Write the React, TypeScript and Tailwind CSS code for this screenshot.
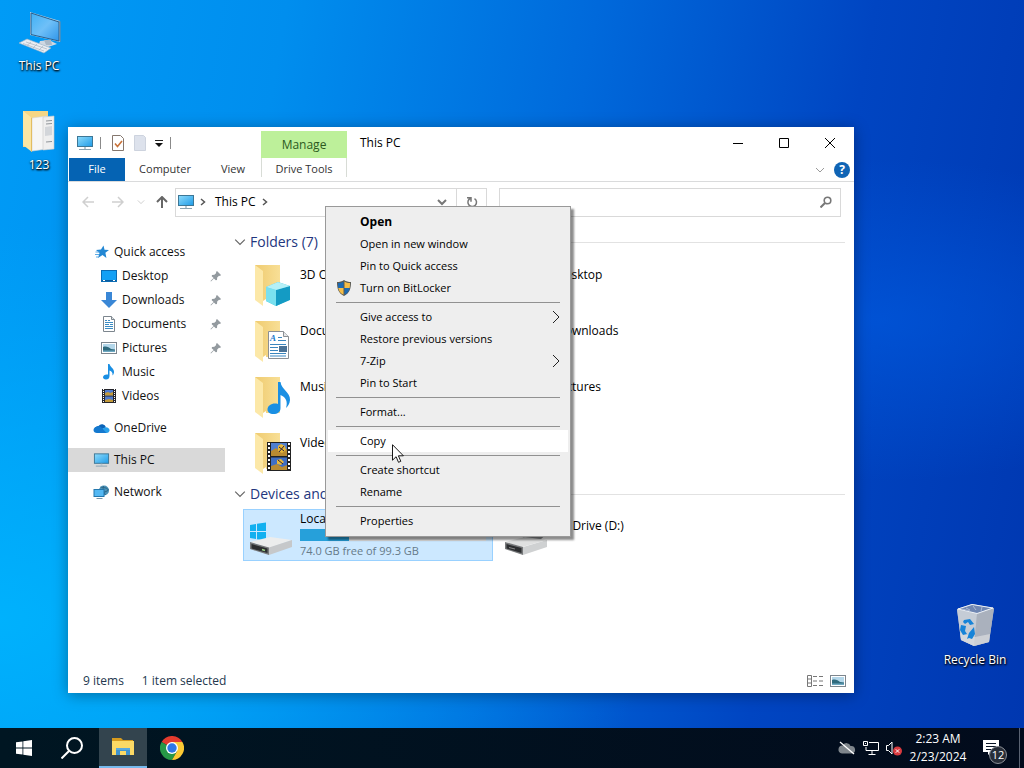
import React from "react";
import clsx from "clsx";

type IconProps = { className?: string };

/* ---------- icons ---------- */

const MonitorIcon = ({ className }: IconProps) => (
  <svg viewBox="0 0 18 16" className={className} aria-hidden="true">
    <defs>
      <linearGradient id="screen" x1="0" y1="0" x2="1" y2="1">
        <stop offset="0" stopColor="#8fdcfb" />
        <stop offset="1" stopColor="#1e9be8" />
      </linearGradient>
    </defs>
    <rect x="1.5" y="1.5" width="15" height="10" fill="url(#screen)" stroke="#3d7796" />
    <path d="M8 12h2v2H8z" fill="#b9c7cf" />
    <path d="M3 14.500h12" stroke="#8aa3b1" />
  </svg>
);

const DesktopPcIcon = ({ className }: IconProps) => (
  <svg viewBox="0 0 48 48" className={className} aria-hidden="true">
    <defs>
      <linearGradient id="pcScreen" x1="0" y1="0" x2="1" y2="1">
        <stop offset="0" stopColor="#3fb0f5" />
        <stop offset="0.5" stopColor="#6fc0f8" />
        <stop offset="1" stopColor="#2f95ea" />
      </linearGradient>
    </defs>
    <path d="M25 33l9-1 8 4-9 3-9-3z" fill="#cfd8e2" />
    <path d="M29 32h7l1 5h-6z" fill="#aab8c6" />
    <path d="M15 4l30 9v21L15 27z" fill="#b9d2e6" />
    <path d="M16 5l28 9v19L16 26.500z" fill="url(#pcScreen)" stroke="#2a5f8c" />
    <path d="M44 13l1.500.5V34L44 33z" fill="#6e8ca5" />
    <path d="M4 35l8-4 24 9-7 5z" fill="#e9edf2" stroke="#9fb2c4" strokeWidth=".6" />
    <path d="M8 35.500l21 7.500M11 34l21 7M12 37.500l4-3.500M18 40l4-4M24 42l4-4" stroke="#a9b5c2" strokeWidth=".7" />
  </svg>
);

const OpenFolderIcon = ({ className }: IconProps) => (
  <svg viewBox="0 0 40 48" className={className} aria-hidden="true">
    <path d="M4 4h25v36H4z" fill="#f5d685" />
    <path d="M13 11l15-2v33l-15 2z" fill="#f6f6f6" stroke="#d5d5d5" strokeWidth=".6" />
    <path d="M24 10l11-1v33l-11 1z" fill="#efefef" stroke="#cbcbcb" strokeWidth=".6" />
    <path d="M27 14l6-.5M27 17l6-.5M27 35l6-.5" stroke="#8f9499" />
    <path d="M26 20l7-1v9l-7 1z" fill="#d3d6da" />
    <path d="M4 4l9 7v34l-9-7z" fill="#fbe6a3" />
    <path d="M12 10.500l1 .5v34l-1-.800z" fill="#e3bd62" />
  </svg>
);

const FolderIcon = ({ children }: { children?: React.ReactNode }) => (
  <svg viewBox="0 0 40 48" className="h-12 w-10 shrink-0" aria-hidden="true">
    <defs>
      <linearGradient id="folderBack" x1="0" y1="0" x2="1" y2="0">
        <stop offset="0" stopColor="#efcb70" />
        <stop offset="1" stopColor="#f8df96" />
      </linearGradient>
    </defs>
    <path d="M2 4h25v36H8z" fill="url(#folderBack)" />
    <path d="M2 4l8 6v35l-8-6z" fill="#fce8a8" />
    <path d="M10 40l3-2v5l-3 2z" fill="#fff" />
    {children}
  </svg>
);

const CubeArt = () => (
  <g>
    <path d="M25 21l12 4-1 14-13 6-10-5V26z" fill="#3fc6df" />
    <path d="M13 26l10 3v16l-10-5z" fill="#79e0ef" />
    <path d="M23 29l14-4v14l-14 6z" fill="#149bc4" />
    <path d="M13 26l12-5 12 4-14 4z" fill="#b5f0f7" />
  </g>
);

const DocArt = () => (
  <g>
    <path d="M15.500 14.500h15l5 5v22h-20z" fill="#fff" stroke="#8a8f94" />
    <path d="M30.500 14.500v5h5" fill="#e4e6e8" stroke="#8a8f94" />
    <text x="17" y="24" fontSize="9" fontStyle="italic" fontWeight="700" fontFamily="Liberation Serif, serif" fill="#1979ca">A</text>
    <path d="M25 20.500h4M25 23.500h8M17 27.500h16M17 30.500h8M17 33.500h8M17 36.500h16M17 39h16" stroke="#3b87bf" />
    <path d="M26 29h8v6h-8z" fill="#4c7396" />
  </g>
);

const NoteArt = () => (
  <path d="M25 9h2.500c1 8 10 10 9.500 18-.4 4-2 6-4 8 2-6 0-11-5.500-13v13c0 4-3 6-7 6-4 0-6-2-6-4.500 0-4 5-7 10.500-5.500z" fill="#1a8fe3" />
);

const FilmArt = () => (
  <g>
    <path d="M14 13h24v29H14z" fill="#222" />
    <path d="M18 14h16v13H18z" fill="#4f7fd0" />
    <path d="M18 28.500h16V41H18z" fill="#3f6fc4" />
    <path d="M18 22l5-3 4 3 7-2v7H18zM18 37l6-2 5 3 5-2v5H18z" fill="#b98b32" />
    <path d="M25 17l3-2 4 2 1 4-4 3-4-2zM24 31l4-1 3 3-3 3-4-1z" fill="#e8b83a" />
    <path d="M26 18l5 4M31 17l-5 6M25 31l5 4" stroke="#2b2340" />
    <path d="M16 14v28M36 14v28" stroke="#fff" strokeWidth="2" strokeDasharray="2 2" />
  </g>
);

const HardDriveIcon = ({ windows }: { windows?: boolean }) => (
  <svg viewBox="0 0 48 40" className="h-10 w-12 shrink-0" aria-hidden="true">
    {windows && (
      <path d="M3 8l6-1v7H3zM10 6.800L19 5.500V14h-9zM3 15h6v7l-6-1zM10 15h9v8.500l-9-1.300z" fill="#12b0f0" />
    )}
    <path d="M3 25l20-5 22 3-23 8z" fill="#eceded" />
    <path d="M3 25l19 5.500V38L3 32z" fill="#77797b" />
    <path d="M22 30.500l23-7.500v7L22 38z" fill="#c6c8ca" />
    <path d="M4.500 27l16 4.500v4.500l-16-4.500z" fill="#2c2e30" />
    <path d="M15 32.500l3 1" stroke="#9fd38a" strokeWidth="1.500" />
  </svg>
);

const DiscDriveIcon = () => (
  <svg viewBox="0 0 48 40" className="h-10 w-12 shrink-0" aria-hidden="true">
    <ellipse cx="31" cy="18" rx="11" ry="6" fill="#8e9194" />
    <path d="M3 25l20-5 22 3-25 7z" fill="#dfe0e0" />
    <path d="M3 25l18 5v8L3 32z" fill="#77797b" />
    <path d="M21 30l24-7v7l-24 8z" fill="#cfd1d2" />
    <path d="M4.500 27l15 4v5l-15-4.500z" fill="#2c2e30" />
    <path d="M7 30.500l6 1.500" stroke="#888" />
  </svg>
);

const StarIcon = ({ className }: IconProps) => (
  <svg viewBox="0 0 16 16" className={className} aria-hidden="true">
    <path d="M9.500 1.500l1 4.300 4.500.200-3.600 2.800 1 5.200L8.500 11 4 14l1.500-5L2 6l5-.5z" fill="#2387d3" />
    <path d="M1.500 8h4M1 10.500h4M2 13h2.500" stroke="#5cabe6" />
  </svg>
);

const DesktopIcon = ({ className }: IconProps) => (
  <svg viewBox="0 0 16 16" className={className} aria-hidden="true">
    <rect x=".5" y="2.500" width="15" height="11" fill="#13a0f5" stroke="#0b6cb4" />
    <path d="M1 12.500h14" stroke="#0a5b9c" />
    <path d="M2 12.500h2M12 12.500h2" stroke="#fff" />
  </svg>
);

const DownloadIcon = ({ className }: IconProps) => (
  <svg viewBox="0 0 16 16" className={className} aria-hidden="true">
    <path d="M5 0h6v8h5l-8 8-8-8h5z" fill="#3a87d6" />
  </svg>
);

const DocumentIcon = ({ className }: IconProps) => (
  <svg viewBox="0 0 16 16" className={className} aria-hidden="true">
    <path d="M2.500.5h8l3 3v12h-11z" fill="#fff" stroke="#7d868e" />
    <path d="M10.500.5v3h3" fill="#dfe3e6" stroke="#7d868e" />
    <path d="M4 4.500h2M7 4.500h2M4 6.500h8M4 8.500h4M4 10.500h8M4 12.500h8M9 8.500h3" stroke="#3b8cc4" />
  </svg>
);

const PictureIcon = ({ className }: IconProps) => (
  <svg viewBox="0 0 16 16" className={className} aria-hidden="true">
    <rect x=".5" y="2.500" width="15" height="11" fill="#fff" stroke="#7d868e" />
    <path d="M2 4h12v8H2z" fill="#b4d7ea" />
    <path d="M2 7c3-1 6 0 8 2l4 .5V11H2z" fill="#2f6a7d" />
    <path d="M2 10.500h12V12H2z" fill="#6fa9c2" />
  </svg>
);

const MusicIcon = ({ className }: IconProps) => (
  <svg viewBox="0 0 16 16" className={className} aria-hidden="true">
    <path d="M7 0h1.500c.5 3 5 4.500 4.500 8.500-.2 1.500-1 2.500-1.600 3C12 9 11 7.500 8.500 6.500V12c0 2.500-1.500 3.500-3.500 3.500S2 14.500 2 13.300c0-2 2.500-3.300 5-2.700z" fill="#1a8fe3" />
  </svg>
);

const VideoIcon = ({ className }: IconProps) => (
  <svg viewBox="0 0 16 16" className={className} aria-hidden="true">
    <path d="M1 1h14v14H1z" fill="#26262c" />
    <path d="M4 2h8v5.500H4zM4 8.500h8V14H4z" fill="#4f7bd0" />
    <path d="M4 5l3-1 2 1 3-1v3.500H4zM4 12l4-1 4 1v2H4z" fill="#c39a3b" />
    <path d="M2.500 1v14M13.500 1v14" stroke="#fff" strokeDasharray="1 1" />
  </svg>
);

const OneDriveIcon = ({ className }: IconProps) => (
  <svg viewBox="0 0 16 16" className={className} aria-hidden="true">
    <path d="M5 6a4.300 4.300 0 0 1 7.500 1.200L7 10 1 8.500C2 7 3.500 6 5 6z" fill="#0a63b8" />
    <path d="M12 7.200c2.400-.2 4 1.300 4 3 0 1.500-1.200 2.800-3 2.800H4l4-4z" fill="#28a0ea" />
    <path d="M4.500 6.200C6 6 7 6.500 8 7.500l5 5.500H3.500C1.500 13 0 11.800 0 10c0-2 1.800-3.600 4.500-3.800z" fill="#1479cf" />
  </svg>
);

const NetworkIcon = ({ className }: IconProps) => (
  <svg viewBox="0 0 16 16" className={className} aria-hidden="true">
    <circle cx="10.500" cy="6.500" r="5" fill="#4a92b8" />
    <path d="M7 3c3 1 6 0 8 3M7 9c3-1 6-1 8-3M10 2c-1 3 0 7 2 9" stroke="#2d6787" fill="none" />
    <rect x=".5" y="5.500" width="10" height="7" fill="#54b8f3" stroke="#2377ad" />
    <path d="M3 14.500h6" stroke="#7895a8" />
  </svg>
);

const PinIcon = ({ className }: IconProps) => (
  <svg viewBox="0 0 12 12" className={className} aria-hidden="true">
    <path d="M7 1l4 4-1 1-1-.2L7.200 7.600 7 10 5.800 10.300 3.900 8.400 1 11.500.5 11l3.100-2.900L1.700 6.200 2 5l2.400-.2L6.200 3 6 2z" fill="#939a9f" />
  </svg>
);

const ShieldIcon = ({ className }: IconProps) => (
  <svg viewBox="0 0 16 16" className={className} aria-hidden="true">
    <path d="M8 0c2 1.500 4.500 2 7 2 0 6-1 11-7 14C2 13 1 8 1 2c2.500 0 5-.5 7-2z" fill="#5b5a52" />
    <path d="M7.500 1.500V8H2.300C2 6.500 2 4.500 2 3c2 0 4-.5 5.500-1.500zM8.500 8h5.200c-.5 3-2 5.200-5.200 6.800z" fill="#1b69b3" />
    <path d="M8.500 1.500C10 2.500 12 3 14 3c0 1.500 0 3.500-.3 5H8.500zM7.500 8v6.800C4.300 13.200 2.800 11 2.300 8z" fill="#f5bd47" />
  </svg>
);

const ChevronDown = ({ className }: IconProps) => (
  <svg viewBox="0 0 10 10" className={className} fill="none" stroke="currentColor" aria-hidden="true">
    <path d="M1 3l4 4 4-4" />
  </svg>
);

const ChevronRight = ({ className }: IconProps) => (
  <svg viewBox="0 0 10 10" className={className} fill="none" stroke="currentColor" strokeWidth="1.500" aria-hidden="true">
    <path d="M3 2l3.500 3L3 8" />
  </svg>
);

const RecycleBinIcon = ({ className }: IconProps) => (
  <svg viewBox="0 0 48 48" className={className} aria-hidden="true">
    <path d="M6 7l15-5 22 4-5 34-15 4-13-6z" fill="#b8bfc9" />
    <path d="M6 7l20 5-3 32-13-6z" fill="#c5ccd6" />
    <path d="M26 12l17-6-5 34-15 4z" fill="#aab1bd" />
    <path d="M7 7l14-4.500L42 6l-16 5.500z" fill="#6f86b2" stroke="#eef2f7" />
    <path d="M15 6l4 2M22 4l3 4M31 5l-1 4M11 7l8 2" stroke="#aebbd2" />
    <path d="M9 31l15 4 15-3-1 8-15 4-13-6z" fill="#dcdddf" opacity=".7" />
    <g fill="#1784d8">
      <path d="M13 18l6-1 4 5-4 1-2-3-3 2-2-2z" />
      <path d="M10 23l5 1-1 5 2 3-4 1-3-5z" />
      <path d="M18 31l5-6 1 7-3 5-3-1-2 1z" />
    </g>
  </svg>
);

const ChromeIcon = ({ className }: IconProps) => (
  <svg viewBox="0 0 24 24" className={className} aria-hidden="true">
    <path d="M12 12L1.600 6A12 12 0 0 1 22.400 6z" fill="#e33b2e" />
    <path d="M12 12L1.600 6A12 12 0 0 0 12 24l5.200-9z" fill="#279847" />
    <path d="M12 6h10.400A12 12 0 0 1 12 24l5.200-9z" fill="#fcc934" />
    <circle cx="12" cy="12" r="6" fill="#fff" />
    <circle cx="12" cy="12" r="4.700" fill="#2f77e6" />
  </svg>
);

const ExplorerIcon = ({ className }: IconProps) => (
  <svg viewBox="0 0 24 20" className={className} aria-hidden="true">
    <path d="M1 1h9l2 2h10v5H1z" fill="#d69b1e" />
    <path d="M1 4h22v14H1z" fill="#fbd965" />
    <path d="M5 11h14v7h-4v-4H9v4H5z" fill="#3f93cf" />
    <path d="M5 11h14v2H5z" fill="#5aa9dd" />
    <path d="M9 14h6v4H9z" fill="#fbd965" />
  </svg>
);

/* ---------- data ---------- */

const quickAccess = [
  { label: "Desktop", Icon: DesktopIcon, pinned: true },
  { label: "Downloads", Icon: DownloadIcon, pinned: true },
  { label: "Documents", Icon: DocumentIcon, pinned: true },
  { label: "Pictures", Icon: PictureIcon, pinned: true },
  { label: "Music", Icon: MusicIcon, pinned: false },
  { label: "Videos", Icon: VideoIcon, pinned: false },
];

const navRoots = [
  { label: "OneDrive", Icon: OneDriveIcon, active: false },
  { label: "This PC", Icon: MonitorIcon, active: true },
  { label: "Network", Icon: NetworkIcon, active: false },
];

const folders = [
  { name: "3D Objects", art: <CubeArt /> },
  { name: "Desktop", art: null },
  { name: "Documents", art: <DocArt /> },
  { name: "Downloads", art: null },
  { name: "Music", art: <NoteArt /> },
  { name: "Pictures", art: null },
  { name: "Videos", art: <FilmArt /> },
];

type MenuEntry = { label: string; bold?: boolean; shield?: boolean; sub?: boolean; hover?: boolean };

const menuGroups: MenuEntry[][] = [
  [
    { label: "Open", bold: true },
    { label: "Open in new window" },
    { label: "Pin to Quick access" },
    { label: "Turn on BitLocker", shield: true },
  ],
  [
    { label: "Give access to", sub: true },
    { label: "Restore previous versions" },
    { label: "7-Zip", sub: true },
    { label: "Pin to Start" },
  ],
  [{ label: "Format..." }],
  [{ label: "Copy", hover: true }],
  [{ label: "Create shortcut" }, { label: "Rename" }],
  [{ label: "Properties" }],
];

/* ---------- explorer window ---------- */

const TitleBar = () => (
  <div className="flex h-[31px] pr-px">
    <div className="flex w-[193px] items-center pl-2">
      <MonitorIcon className="h-4 w-[18px]" />
      <span className="ml-1.5 h-3 w-px bg-[#8a8a8a]" />
      <button aria-label="Properties" className="ml-2.5">
        <svg viewBox="0 0 14 16" className="h-4 w-3.5">
          <path d="M1.500.5h8l3 3v12h-11z" fill="#fff" stroke="#85776e" />
          <path d="M4 8.500l2.500 3 4.500-5.500" fill="none" stroke="#c9733a" strokeWidth="1.600" />
        </svg>
      </button>
      <button aria-label="New folder" className="ml-2">
        <svg viewBox="0 0 14 16" className="h-4 w-3.5">
          <path d="M1.500.5h9l2 2v13h-11z" fill="#dde2ec" stroke="#cdd3de" />
        </svg>
      </button>
      <button aria-label="Customize Quick Access Toolbar" className="ml-2">
        <svg viewBox="0 0 8 8" className="h-2 w-2">
          <path d="M0 1.500h8" stroke="#222" />
          <path d="M0 4h8L4 8z" fill="#111" />
        </svg>
      </button>
      <span className="ml-[7px] h-3 w-px bg-[#8a8a8a]" />
    </div>
    <button className="mt-1 w-[86px] bg-[#bdf09a] text-[#2c5a1e]">Manage</button>
    <h1 className="flex-1 pl-[13px] leading-8 text-black">This PC</h1>
    <button aria-label="Minimize" className="flex w-[46px] items-center justify-center">
      <svg viewBox="0 0 10 10" className="h-2.5 w-2.5" stroke="#000"><path d="M0 5.500h10" /></svg>
    </button>
    <button aria-label="Maximize" className="flex w-[46px] items-center justify-center">
      <svg viewBox="0 0 10 10" className="h-2.5 w-2.5" fill="none" stroke="#000"><path d="M.5.5h9v9h-9z" /></svg>
    </button>
    <button aria-label="Close" className="flex w-[46px] items-center justify-center">
      <svg viewBox="0 0 10 10" className="h-2.5 w-2.5" stroke="#000"><path d="M0 0l10 10M10 0L0 10" /></svg>
    </button>
  </div>
);

const RibbonTabs = () => (
  <div className="flex h-6 border-b border-[#dadbdc] pl-px text-[11px] text-[#333]">
    <button className="w-14 bg-[#0563b3] text-white">File</button>
    <button className="w-20">Computer</button>
    <button className="w-14">View</button>
    <button className="h-[19px] w-[86px] border-x border-[#d8dcd6] pt-1">Drive Tools</button>
    <div className="flex flex-1 items-center justify-end gap-[9px] pr-1">
      <button aria-label="Expand the Ribbon">
        <ChevronDown className="h-2.5 w-2.5 text-[#9a9a9a]" />
      </button>
      <button aria-label="Help" className="h-4 w-4 rounded-full bg-[#0f64b5] text-center text-xs leading-4 font-bold text-white">
        ?
      </button>
    </div>
  </div>
);

const AddressRow = () => (
  <div className="flex h-10 items-center pr-[13px] pl-3.5">
    <button aria-label="Back">
      <svg viewBox="0 0 12 12" className="h-3 w-3" fill="none" stroke="#cfcfcf" strokeWidth="1.500"><path d="M12 6H1M6 1L1 6l5 5" /></svg>
    </button>
    <button aria-label="Forward" className="ml-[18px]">
      <svg viewBox="0 0 12 12" className="h-3 w-3" fill="none" stroke="#cfcfcf" strokeWidth="1.500"><path d="M0 6h11M6 1l5 5-5 5" /></svg>
    </button>
    <button aria-label="Recent locations" className="ml-[13px]">
      <ChevronDown className="h-2 w-2 text-[#c4c4c4]" />
    </button>
    <button aria-label="Up" className="mr-[7px] ml-[11px]">
      <svg viewBox="0 0 12 12" className="h-3 w-3" fill="none" stroke="#666" strokeWidth="2"><path d="M6 12V1M1 6l5-5 5 5" /></svg>
    </button>
    <div className="flex h-[29px] w-[312px] items-center border border-[#d9d9d9] text-black">
      <MonitorIcon className="ml-px h-4 w-[18px]" />
      <ChevronRight className="mx-[3px] h-2.5 w-2.5 text-[#555]" />
      <button className="pr-1 pl-1">This PC</button>
      <ChevronRight className="h-2.5 w-2.5 text-[#555]" />
      <button aria-label="Previous locations" className="ml-auto px-[9px]">
        <ChevronDown className="h-2.5 w-2.5 stroke-2 text-[#777]" />
      </button>
      <button aria-label="Refresh" className="flex h-full w-[30px] items-center justify-center border-l border-[#d9d9d9]">
        <svg viewBox="0 0 12 12" className="h-3 w-3" fill="none" stroke="#777" strokeWidth="1.500">
          <path d="M4.500 2.300a4.300 4.300 0 1 0 4 .3M1 1.700h4v4" />
        </svg>
      </button>
    </div>
    <div className="ml-3 flex h-[29px] flex-1 items-center border border-[#d9d9d9] pr-2">
      <input aria-label="Search This PC" className="h-full min-w-0 flex-1 px-2 outline-none" />
      <svg viewBox="0 0 12 12" className="h-3 w-3" fill="none" stroke="#777" strokeWidth="1.600" aria-hidden="true">
        <circle cx="7.500" cy="4.500" r="3.300" />
        <path d="M5 7l-4.500 4.500" strokeWidth="2" />
      </svg>
    </div>
  </div>
);

const NavPane = () => (
  <nav className="w-[157px] shrink-0 pt-[18px] text-[#111]">
    <a href="#quick" className="flex h-6 items-center gap-1 pl-[26px]">
      <StarIcon className="h-4 w-4" />
      Quick access
    </a>
    {quickAccess.map(({ label, Icon, pinned }) => (
      <a key={label} href="#nav" className="flex h-6 items-center gap-[5px] pr-[3px] pl-[33px]">
        <Icon className="h-4 w-4" />
        {label}
        {pinned && <PinIcon className="ml-auto h-3 w-3" />}
      </a>
    ))}
    {navRoots.map(({ label, Icon, active }) => (
      <a
        key={label}
        href="#nav"
        className={clsx("mt-2 flex h-6 items-center gap-1 pl-[25px]", active && "bg-[#d9d9d9]")}
      >
        <Icon className="h-4 w-[17px]" />
        {label}
      </a>
    ))}
  </nav>
);

const GroupHeader = ({ children }: { children: React.ReactNode }) => (
  <h2 className="flex h-6 items-center gap-1 text-sm text-[#23367e]">
    <ChevronDown className="h-3 w-3 text-[#666]" />
    {children}
    <span className="ml-1 h-px flex-1 bg-[#e2e2e2]" />
  </h2>
);

const ContentPane = () => (
  <main className="min-w-0 flex-1 pt-2 pr-[9px] pl-[9px] text-black">
    <GroupHeader>Folders (7)</GroupHeader>
    <div className="grid grid-cols-[256px_256px] pt-1">
      {folders.map(({ name, art }) => (
        <div key={name} className="flex h-14 pt-[3px] pl-[19px]">
          <FolderIcon>{art}</FolderIcon>
          <span className="pt-1.5 pl-[7px] leading-4">{name}</span>
        </div>
      ))}
    </div>
    <GroupHeader>Devices and drives (2)</GroupHeader>
    <div className="grid grid-cols-[250px_250px] gap-1.5 pt-[3px] pl-[9px]">
      <div className="flex h-[52px] border border-[#99d1ff] bg-[#cce8ff] pl-[3px]">
        <div className="flex items-end pb-[3px]">
          <HardDriveIcon windows />
        </div>
        <div className="flex-1 pt-px pr-1.5 pl-[5px] text-[11px]">
          <div className="text-xs leading-4">Local Disk (C:)</div>
          <div className="my-0.5 h-3 bg-[#e6e6e6]">
            <div className="h-full w-[49px] bg-[#26a0da]" />
          </div>
          <div className="leading-4 text-[#667a89]">74.0 GB free of 99.3 GB</div>
        </div>
      </div>
      <div className="flex h-[52px] pl-[3px]">
        <div className="flex items-end pb-1">
          <DiscDriveIcon />
        </div>
        <span className="pt-[9px] pl-[3px] leading-4">CD Drive (D:)</span>
      </div>
    </div>
  </main>
);

const StatusBar = () => (
  <footer className="flex h-6 items-center pr-2 pl-[15px] text-[#24384f]">
    <span>9 items</span>
    <span className="ml-[18px]">1 item selected</span>
    <button aria-label="Details view" className="ml-auto">
      <svg viewBox="0 0 17 12" className="h-3 w-[17px]" stroke="#777" fill="none">
        <path d="M.5.5h4v11h-4zM.5 4h4M.5 8h4" />
        <path d="M6 1.500h4M6 6h4M6 10.500h4M12 1.500h4M12 6h4M12 10.500h4" />
      </svg>
    </button>
    <button aria-label="Large icons view" className="ml-1.5">
      <PictureIcon className="h-4 w-4" />
    </button>
  </footer>
);

const ExplorerWindow = () => (
  <section className="absolute top-[127px] left-[68px] flex h-[566px] w-[786px] flex-col bg-white shadow-[0_2px_14px_rgba(0,0,0,0.35)]">
    <TitleBar />
    <RibbonTabs />
    <AddressRow />
    <div className="flex flex-1">
      <NavPane />
      <ContentPane />
    </div>
    <StatusBar />
  </section>
);

/* ---------- context menu ---------- */

const ContextMenu = () => (
  <div
    role="menu"
    className="absolute top-[206px] left-[325px] w-[246px] border border-[#999] bg-[#eeeeee] px-0.5 py-1 text-[11px] text-black shadow-[3px_3px_2px_rgba(0,0,0,0.45)]"
  >
    {menuGroups.map((group, index) => (
      <div key={index}>
        {index > 0 && <div className="mx-2 my-[3px] h-px bg-[#919191]" />}
        {group.map((entry) => (
          <button
            key={entry.label}
            role="menuitem"
            className={clsx(
              "flex h-[22px] w-full items-center pr-2 pl-2 text-left",
              entry.bold && "text-xs font-bold",
              entry.hover && "bg-white"
            )}
          >
            <span className="w-6">{entry.shield && <ShieldIcon className="h-4 w-4" />}</span>
            {entry.label}
            {entry.sub && (
              <svg viewBox="0 0 8 14" className="ml-auto h-3.5 w-2" fill="none" stroke="#222" aria-hidden="true">
                <path d="M1 1l6 6-6 6" />
              </svg>
            )}
          </button>
        ))}
      </div>
    ))}
  </div>
);

const Cursor = () => (
  <svg viewBox="0 0 12 19" className="absolute top-[444px] left-[392px] h-[19px] w-3" aria-hidden="true">
    <path d="M.5.7v15.500l3.600-3.500 2.400 5.600 2.300-1-2.400-5.500h5z" fill="#fff" stroke="#000" strokeWidth=".9" />
  </svg>
);

/* ---------- desktop and taskbar ---------- */

type ShortcutProps = { label: string; className: string; children: React.ReactNode };

const Shortcut = ({ label, className, children }: ShortcutProps) => (
  <button
    className={clsx(
      "absolute flex w-[78px] flex-col items-center gap-0.5 text-white [text-shadow:0_1px_2px_#000,1px_1px_2px_#000]",
      className
    )}
  >
    {children}
    <span className="leading-4">{label}</span>
  </button>
);

const Taskbar = () => (
  <footer className="flex h-10 shrink-0 items-stretch bg-linear-to-r from-[#001622] to-[#020b1c] text-white">
    <button aria-label="Start" className="flex w-12 items-center justify-center">
      <svg viewBox="0 0 16 16" className="h-4 w-4" fill="#fff">
        <path d="M0 2.300l6.500-.9v6.200H0zM7.300 1.300L16 0v7.600H7.300zM0 8.400h6.500v6.200L0 13.700zM7.300 8.400H16V16l-8.700-1.200z" />
      </svg>
    </button>
    <button aria-label="Search" className="flex w-12 items-center justify-center">
      <svg viewBox="0 0 22 22" className="h-[22px] w-[22px]" fill="none" stroke="#fff" strokeWidth="2">
        <circle cx="13.500" cy="8.500" r="7.500" />
        <path d="M8 14l-7.500 7.500" />
      </svg>
    </button>
    <button aria-label="File Explorer" className="ml-[3px] flex w-12 items-center justify-center border-b-2 border-[#76b9ed] bg-[#33444e]">
      <ExplorerIcon className="h-5 w-6" />
    </button>
    <button aria-label="Google Chrome" className="ml-px flex w-12 items-center justify-center">
      <ChromeIcon className="h-6 w-6" />
    </button>

    <div className="ml-auto flex items-center">
      <svg viewBox="0 0 18 14" className="h-3.5 w-[18px]" aria-hidden="true">
        <path d="M5 4.500a4 4 0 0 1 7.500.5A3.800 3.800 0 0 1 14 12.500H4A3.800 3.800 0 0 1 5 4.500z" fill="#7e858b" />
        <path d="M2 1l14 12" stroke="#fff" strokeWidth="1.300" />
      </svg>
      <svg viewBox="0 0 16 14" className="ml-[7px] h-3.5 w-4" fill="none" stroke="#fff" aria-hidden="true">
        <path d="M6 1.500h9.500v8H3V6M9 9.500v4M5.500 13.500h7" />
        <path d="M.5.500h4v4h-4zM2.500 2v1" />
      </svg>
      <svg viewBox="0 0 18 16" className="ml-1.5 h-4 w-[18px]" fill="none" stroke="#fff" aria-hidden="true">
        <path d="M1.500 5.500h2L7 2v12l-3.500-3.500h-2z" />
        <circle cx="12.500" cy="11" r="4.500" fill="#d93a3f" stroke="none" />
        <path d="M10.800 9.300l3.400 3.400M14.200 9.300l-3.400 3.400" />
      </svg>
      <div className="ml-px w-[68px] text-center leading-[18px]">
        <div>2:23 AM</div>
        <div>2/23/2024</div>
      </div>
      <button aria-label="Notifications" className="relative ml-2.5 h-10 w-[37px]">
        <svg viewBox="0 0 18 18" className="h-[18px] w-[18px]" aria-hidden="true">
          <path d="M1 1h16v12h-8l-3 3v-3H1z" fill="#fff" />
          <path d="M4 4.500h10M4 7.500h10M4 10.500h6" stroke="#0a1526" />
        </svg>
        <span className="absolute top-[18px] left-[7px] h-[18px] w-[18px] rounded-full border border-[#8b8f96] bg-[#272d38] text-center text-[11px] leading-4">
          12
        </span>
      </button>
      <button aria-label="Show desktop" className="h-10 w-[5px] border-l border-[#5a6272]" />
    </div>
  </footer>
);

const App = () => {
  return (
    <div className="flex min-h-screen flex-col text-xs font-[Open_Sans,Noto_Sans,sans-serif]">
      <div className="relative flex-1 overflow-hidden bg-[radial-gradient(ellipse_at_86%_44%,rgba(0,92,226,0.6)_0%,rgba(0,80,210,0)_28%),radial-gradient(ellipse_at_0%_85%,rgba(0,184,255,0.8)_0%,rgba(0,170,250,0)_45%),linear-gradient(100deg,#009bf6_0%,#008eee_25%,#0069db_52%,#0045c2_76%,#0037b0_100%)]">
        <Shortcut label="This PC" className="top-2 left-0">
          <DesktopPcIcon className="h-12 w-12" />
        </Shortcut>
        <Shortcut label="123" className="top-[107px] left-0">
          <OpenFolderIcon className="h-12 w-10" />
        </Shortcut>
        <Shortcut label="Recycle Bin" className="top-[602px] right-[10px]">
          <RecycleBinIcon className="h-12 w-12" />
        </Shortcut>

        <ExplorerWindow />
        <ContextMenu />
        <Cursor />
      </div>
      <Taskbar />
    </div>
  );
};

export default App;
